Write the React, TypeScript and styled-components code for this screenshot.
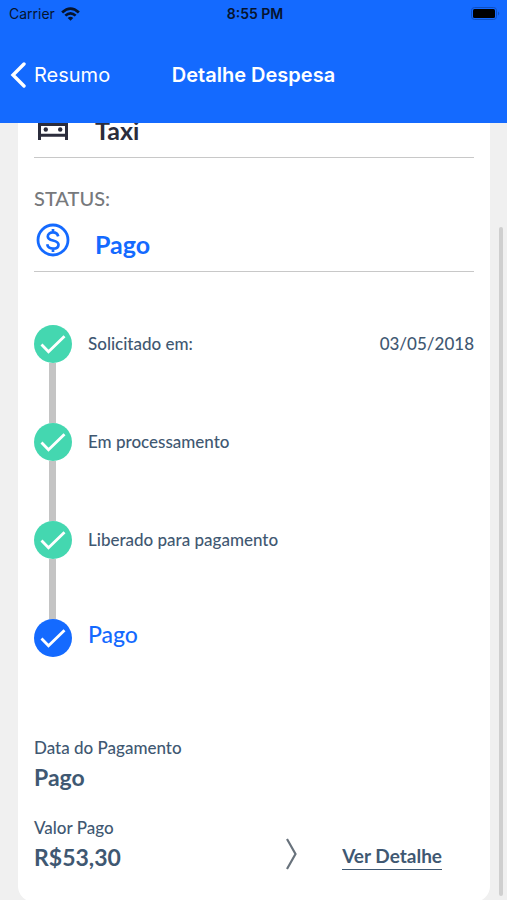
import React from "react";
import styled, { createGlobalStyle } from "styled-components";

const color = {
  blue: "#146aff",
  green: "#44d7b0",
  slate: "#3f5872",
  ink: "#2b2d3c",
  gray: "#77797c",
  line: "#c8c8c8",
  thumb: "#cfcfcf",
  rail: "#c4c4c4",
  page: "#f0f0f0",
};

const GlobalStyle = createGlobalStyle`
  *, *::before, *::after { box-sizing: border-box; }
  body { margin: 0; background: ${color.page}; }
  h1, h2, p, ol, dl, dd { margin: 0; padding: 0; }
  button { font: inherit; border: 0; background: none; padding: 0; cursor: pointer; }
`;

const Screen = styled.div`
  display: flex;
  flex-direction: column;
  height: 100vh;
  overflow: hidden;
  font-family: Lato, "Open Sans", sans-serif;
  color: ${color.slate};
`;

const Header = styled.header`
  flex: none;
  background: ${color.blue};
  font-family: Inter, Roboto, sans-serif;
`;

const StatusBar = styled.div`
  display: grid;
  grid-template-columns: 1fr auto 1fr;
  align-items: center;
  height: 27px;
  padding: 0 6px 0 9px;
  font-size: 14px;
  line-height: 20px;
  color: #06142e;
`;

const Carrier = styled.span`
  display: flex;
  align-items: center;
  gap: 6px;
`;

const Clock = styled.time`
  font-weight: 600;
`;

const Battery = styled.span`
  display: flex;
  justify-content: flex-end;
`;

const NavBar = styled.nav`
  display: grid;
  grid-template-columns: 1fr auto 1fr;
  align-items: center;
  height: 96px;
  padding: 0 10px;
  color: #fff;
  font-size: 20px;
  line-height: 28px;
`;

const BackButton = styled.button`
  display: flex;
  align-items: center;
  justify-self: start;
  gap: 8px;
  color: #fff;
`;

const Title = styled.h1`
  font-size: 20px;
  font-weight: 600;
`;

const Scroller = styled.main`
  position: relative;
  flex: 1;
  min-height: 0;
  overflow: hidden;
  padding: 0 17px 0 18px;
`;

const ScrollThumb = styled.div`
  position: absolute;
  top: 104px;
  right: 4px;
  bottom: 4px;
  width: 4px;
  border-radius: 2px;
  background: ${color.thumb};
`;

const Card = styled.article`
  margin-top: -16px;
  padding: 0 16px 28px;
  border-radius: 16px;
  background: #fff;
`;

const Field = styled.section`
  border-bottom: 1px solid ${color.line};
`;

const FieldLabel = styled.h2`
  padding-top: 28px;
  padding-bottom: 1px;
  font-size: 20px;
  font-weight: 500;
  line-height: 24px;
  color: ${color.gray};
`;

const FieldValue = styled.div<{ $status?: boolean }>`
  display: flex;
  align-items: center;
  gap: 24px;
  height: ${(p) => (p.$status ? "60px" : "50px")};
  padding-left: 1px;
  font-size: 25px;
  font-weight: 700;
  line-height: 32px;
  color: ${(p) => (p.$status ? color.blue : color.ink)};
`;

const FieldText = styled.p<{ $low?: boolean }>`
  padding: ${(p) => (p.$low ? "6px 0 0" : "0 0 4px")};
`;

const Steps = styled.ol`
  list-style: none;
  padding-top: 53px;
`;

const Step = styled.li`
  display: grid;
  grid-template-columns: 38px 1fr auto;
  column-gap: 16px;
  font-size: 17px;
  font-weight: 500;
  line-height: 38px;
`;

const Marker = styled.div`
  display: flex;
  flex-direction: column;
`;

const Dot = styled.span<{ $current: boolean }>`
  display: flex;
  align-items: center;
  justify-content: center;
  width: 38px;
  height: 38px;
  border-radius: 50%;
  background: ${(p) => (p.$current ? color.blue : color.green)};
`;

const Rail = styled.span`
  width: 7px;
  height: 60px;
  margin-left: 15px;
  background: ${color.rail};
`;

const StepLabel = styled.span<{ $current: boolean }>`
  font-size: ${(p) => (p.$current ? "23px" : "17px")};
  line-height: ${(p) => (p.$current ? "30px" : "38px")};
  color: ${(p) => (p.$current ? color.blue : "inherit")};
`;

const Payment = styled.dl`
  display: flex;
  flex-direction: column;
  gap: 22px;
  padding-top: 79px;
`;

const PaymentRow = styled.div`
  display: flex;
  align-items: flex-end;
`;

const Amount = styled.div`
  flex: 1;
`;

const Term = styled.dt`
  font-size: 17px;
  font-weight: 500;
  line-height: 24px;
`;

const Value = styled.dd`
  font-size: 23px;
  font-weight: 700;
  line-height: 34px;
`;

const DetailLink = styled.a`
  margin: 0 32px 4px 44px;
  border-bottom: 1px solid ${color.slate};
  font-size: 19px;
  font-weight: 700;
  line-height: 26px;
  color: ${color.slate};
  text-decoration: none;
`;

const Chevron = styled.span`
  display: flex;
  padding-bottom: 3px;
`;

const WifiIcon = () => (
  <svg width="19" height="14" viewBox="0 0 19 14" fill="currentColor" aria-hidden="true">
    <path d="M9.500 13.800 6.700 10.900Q9.500 8.700 12.300 10.900Z" />
    <path d="M3.400 7.700Q9.500 2.400 15.600 7.700L13.700 9.500Q9.500 6 5.300 9.500Z" />
    <path d="M0.200 4.600Q9.500-4 18.800 4.600L16.900 6.400Q9.500-.3 2.100 6.400Z" />
  </svg>
);

const BatteryIcon = () => (
  <svg width="30" height="14" viewBox="0 0 30 14" aria-hidden="true">
    <rect x="0.500" y="0.500" width="25" height="12" rx="3" fill="none" stroke="#0f4fc0" />
    <rect x="2" y="2" width="22" height="9" rx="1.500" fill="#000" />
    <path d="M27 4.500q2.500 2 0 4z" fill="#0f4fc0" />
  </svg>
);

const BackIcon = () => (
  <svg width="16" height="26" viewBox="0 0 16 26" fill="none" aria-hidden="true">
    <path d="M14 2 3 13l11 11" stroke="currentColor" strokeWidth="3.400" strokeLinecap="round" />
  </svg>
);

const CarIcon = () => (
  <svg width="36" height="36" viewBox="0 0 36 36" fill="none" stroke="currentColor" aria-hidden="true">
    <path d="M5 10.500 8.500 1.500h19L31 10.500" strokeWidth="3" />
    <path d="M4.500 26V10.500h27V26M4.500 21.300h27" strokeWidth="3" />
    <circle cx="10.800" cy="15.500" r="2.200" fill="currentColor" stroke="none" />
    <circle cx="25.200" cy="15.500" r="2.200" fill="currentColor" stroke="none" />
  </svg>
);

const DollarIcon = () => (
  <svg width="36" height="36" viewBox="0 0 36 36" fill="none" stroke="currentColor" aria-hidden="true">
    <circle cx="18" cy="17" r="15" strokeWidth="2.800" />
    <path
      d="M18 6v4M18 24.500V29M23.200 13.400C22.600 10.700 20.600 9.400 18 9.400c-3 0-5.200 1.600-5.200 4 0 2.400 1.700 3.300 5.200 4.100 3.800.9 5.500 2 5.500 4.200 0 2.400-2.200 3.900-5.500 3.900-3.200 0-5.300-1.500-5.800-4.300"
      strokeWidth="2.700"
    />
  </svg>
);

const CheckIcon = () => (
  <svg width="38" height="38" viewBox="0 0 38 38" fill="none" aria-hidden="true">
    <path d="M7.500 19.500 14.500 26.800 30.500 11.200" stroke="#fff" strokeWidth="2.800" />
  </svg>
);

const ChevronIcon = () => (
  <svg width="13" height="34" viewBox="0 0 13 34" fill="none" aria-hidden="true">
    <path d="M2 2 10.500 17 2 32" stroke="#68727c" strokeWidth="2.200" />
  </svg>
);

const steps = [
  { label: "Solicitado em:", date: "03/05/2018" },
  { label: "Em processamento" },
  { label: "Liberado para pagamento" },
  { label: "Pago" },
];

export default function App() {
  return (
    <Screen>
      <GlobalStyle />
      <Header>
        <StatusBar>
          <Carrier>
            Carrier <WifiIcon />
          </Carrier>
          <Clock>8:55 PM</Clock>
          <Battery>
            <BatteryIcon />
          </Battery>
        </StatusBar>
        <NavBar>
          <BackButton type="button">
            <BackIcon />
            Resumo
          </BackButton>
          <Title>Detalhe Despesa</Title>
        </NavBar>
      </Header>
      <Scroller>
        <Card>
          <Field>
            <FieldValue>
              <CarIcon />
              <FieldText>Taxi</FieldText>
            </FieldValue>
          </Field>
          <Field>
            <FieldLabel>STATUS:</FieldLabel>
            <FieldValue $status>
              <DollarIcon />
              <FieldText $low>Pago</FieldText>
            </FieldValue>
          </Field>
          <Steps>
            {steps.map((step, i) => {
              const current = i === steps.length - 1;
              return (
                <Step key={step.label}>
                  <Marker>
                    <Dot $current={current}>
                      <CheckIcon />
                    </Dot>
                    {!current && <Rail />}
                  </Marker>
                  <StepLabel $current={current}>{step.label}</StepLabel>
                  {step.date && <time dateTime="2018-05-03">{step.date}</time>}
                </Step>
              );
            })}
          </Steps>
          <Payment>
            <div>
              <Term>Data do Pagamento</Term>
              <Value>Pago</Value>
            </div>
            <PaymentRow>
              <Amount>
                <Term>Valor Pago</Term>
                <Value>R$53,30</Value>
              </Amount>
              <Chevron>
                <ChevronIcon />
              </Chevron>
              <DetailLink href="#detalhe">Ver Detalhe</DetailLink>
            </PaymentRow>
          </Payment>
        </Card>
        <ScrollThumb />
      </Scroller>
    </Screen>
  );
}
